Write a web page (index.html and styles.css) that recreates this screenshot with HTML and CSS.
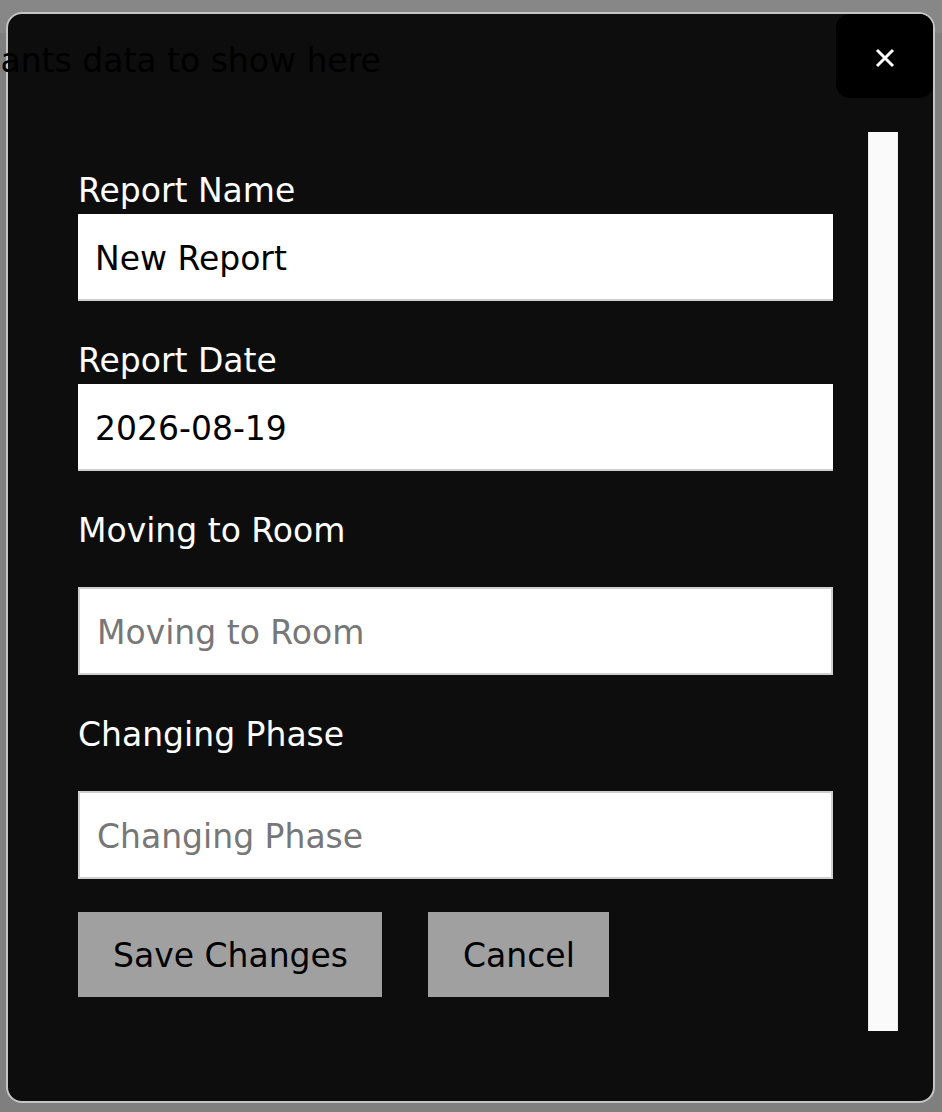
FILE: index.html
```html
<!DOCTYPE html>
<html>
<head>
    <link rel="stylesheet" href="styles.css">
</head>
<body>
    <div class="modal" id="edit-modal">
        <button class="close-button" type="button" aria-label="Close">
            <svg width="20" height="20" viewBox="0 0 20 20">
                <path d="M2 2 L18 18 M18 2 L2 18" stroke="#fff" stroke-width="3" fill="none"/>
            </svg>
        </button>
        <div class="modal-content">
            <form id="edit-form" class="report-form">
                <div class="field">
                    <label for="report-name">Report Name</label>
                    <input type="text" id="report-name" class="plain-input" value="New Report">
                </div>
                <div class="field">
                    <label for="report-date">Report Date</label>
                    <input type="text" id="report-date" class="plain-input" value="2026-08-19">
                </div>
                <div class="field spaced">
                    <label for="moving-room">Moving to Room</label>
                    <input type="text" id="moving-room" placeholder="Moving to Room">
                </div>
                <div class="field spaced">
                    <label for="changing-phase">Changing Phase</label>
                    <input type="text" id="changing-phase" placeholder="Changing Phase">
                </div>
                <div class="actions">
                    <button type="submit" class="action-button">Save Changes</button>
                    <button type="button" class="action-button">Cancel</button>
                </div>
            </form>
            <div class="scroll-track"></div>
        </div>
    </div>

    <p class="empty-note">No participants data to show here</p>
</body>
</html>
```

FILE: styles.css
```css
* {
    box-sizing: border-box;
}

html, body {
    margin: 0;
    padding: 0;
    height: 100%;
    overflow: hidden;
    font-family: "DejaVu Sans", Verdana, sans-serif;
}

body {
    background: linear-gradient(to bottom, #878787 0, #878787 33px, #7f7f7f 33px);
}

.empty-note {
    position: absolute;
    top: 41px;
    left: -180px;
    margin: 0;
    font-size: 33px;
    color: #000;
    white-space: nowrap;
    z-index: 2;
}

.modal {
    position: relative;
    margin: 12px 7px 9px 6px;
    height: 1091px;
    border: 2px solid #c4c4c4;
    border-radius: 16px;
    background-color: #0d0d0d;
    padding: 118px 35px 0 70px;
}

.close-button {
    position: absolute;
    top: 0;
    right: 0;
    width: 97px;
    height: 84px;
    border: none;
    border-radius: 14px;
    background-color: #000;
    display: flex;
    justify-content: center;
    align-items: center;
    padding: 4px 0 0 0;
    cursor: pointer;
}

.modal-content {
    display: flex;
    align-items: flex-start;
    gap: 35px;
}

.report-form {
    width: 755px;
    padding-top: 40px;
}

.field {
    margin-bottom: 41px;
}

.field label {
    display: block;
    color: #fff;
    font-size: 33px;
    line-height: 37px;
    margin-bottom: 5px;
}

.field.spaced label {
    margin-bottom: 38px;
}

.field input {
    display: block;
    width: 100%;
    height: 88px;
    padding: 3px 17px 0 17px;
    font-family: inherit;
    font-size: 33px;
    color: #000;
    background-color: #fff;
    border: 2px solid #cfcfcf;
    border-radius: 0;
    outline: none;
}

.field input.plain-input {
    height: 87px;
    border: none;
    border-bottom: 2px solid #cfcfcf;
}

.field input::placeholder {
    color: #777;
}

.actions {
    display: flex;
    gap: 46px;
    margin-top: -8px;
}

.action-button {
    height: 85px;
    padding: 2px 34px 0 35px;
    border: none;
    background-color: #a0a0a0;
    color: #000;
    font-family: inherit;
    font-size: 33px;
    cursor: pointer;
}

.scroll-track {
    width: 30px;
    height: 899px;
    flex-shrink: 0;
    background-color: #fafafa;
    border-left: 1px solid #e6e6e6;
    border-right: 1px solid #eeeeee;
}
```
